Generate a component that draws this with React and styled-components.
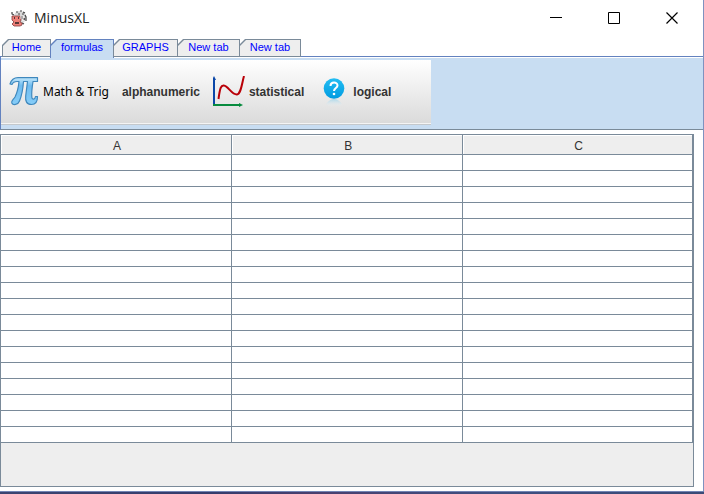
import React, { useState } from "react";
import styled, { createGlobalStyle } from "styled-components";

const line = "#7a8a99";
const accent = "#6382bf";
const sky = "#c8ddf2";

const GlobalStyle = createGlobalStyle`
  * { box-sizing: border-box; }
  body {
    margin: 0;
    background: #fff;
    font-family: "Liberation Sans", Arial, sans-serif;
  }
  button { font: inherit; border: 0; margin: 0; background: none; }
`;

const Window = styled.main`
  display: flex;
  flex-direction: column;
  min-height: 100vh;
`;

const Body = styled.div`
  flex: 1;
  display: flex;
  flex-direction: column;
  border-right: 1px solid #7f92c0;
`;

const TitleBar = styled.header`
  display: flex;
  align-items: center;
  height: 37px;
  padding: 0 2px 1px 11px;
`;

const Title = styled.h1`
  flex: 1;
  margin: 0;
  padding-left: 6px;
  font: 14px/20px "Open Sans", "Noto Sans", sans-serif;
  color: #222;
`;

const WindowButton = styled.button`
  display: grid;
  place-items: center;
  width: 58px;
  height: 36px;
  padding: 0;
`;

const TabStrip = styled.div`
  display: flex;
  align-items: flex-start;
  height: 20px;
  padding: 2px 0 0 2px;
  box-shadow: inset 0 -1px ${accent};
`;

const Tab = styled.button`
  position: relative;
  isolation: isolate;
  height: ${(p) => (p.$active ? 19 : 18)}px;
  width: ${(p) => p.$width}px;
  margin-left: ${(p) => (p.$first ? 0 : -1)}px;
  padding: 0 0 ${(p) => (p.$active ? 3 : 2)}px;
  font-size: 11px;
  line-height: 16px;
  text-align: center;
  color: #0000ff;
  background: ${(p) => (p.$active ? accent : line)};
  clip-path: polygon(6px 0, 100% 0, 100% 100%, 0 100%, 0 6px);

  &::before {
    content: "";
    position: absolute;
    z-index: -1;
    inset: 1px 1px ${(p) => (p.$active ? 0 : 1)}px 1px;
    background: ${(p) => (p.$active ? sky : "#eee")};
    clip-path: polygon(6px 0, 100% 0, 100% 100%, 0 100%, 0 6px);
  }
`;

const Ribbon = styled.section`
  height: 73px;
  padding-top: 3px;
  border: solid ${line};
  border-width: 0 0 1px;
  border-left: 1px solid ${accent};
  background: ${sky};
  box-shadow: inset 0 1px #fff;
`;

const Tools = styled.div`
  display: flex;
  align-items: center;
  width: 430px;
  max-width: 100%;
  height: 65px;
  padding: 0 0 1px 8px;
  border-bottom: 1px solid #c4c8cc;
  background: linear-gradient(#fff, #dadada);
  box-shadow: inset 0 -1px #f4f4f4;
`;

const Tool = styled.button`
  display: flex;
  align-items: center;
  gap: ${(p) => p.$gap || 4}px;
  margin-right: 13px;
  padding: 0;
  white-space: nowrap;
  font: ${(p) =>
    p.$plain
      ? '12px/16px "Noto Sans", "Open Sans", sans-serif'
      : 'bold 12px/16px "Liberation Sans", Arial, sans-serif'};
  color: ${(p) => (p.$plain ? "#000" : "#333")};

  &:last-child { padding-left: 6px; }
`;

const Sheet = styled.div`
  flex: 1;
  margin: 4px 9px 4px 0;
  border: 1px solid ${line};
  background: #eee;
`;

const Grid = styled.table`
  width: 100%;
  table-layout: fixed;
  border-collapse: separate;
  border-spacing: 0;
`;

const Column = styled.col`
  width: ${(p) => (p.$last ? "auto" : "33.4%")};
`;

const Heading = styled.th`
  height: 20px;
  padding: 2px 0 0 2px;
  font-size: 12px;
  font-weight: normal;
  line-height: 16px;
  color: #333;
  background: #eee;
  border: solid ${line};
  border-width: 0 1px 1px 0;
  box-shadow: inset 1px 1px #fff;
`;

const Cell = styled.td`
  height: 16px;
  padding: 0;
  background: #fff;
  border: solid ${line};
  border-width: 0 1px 1px 0;
`;

const Desktop = styled.div`
  height: 3px;
  border-top: 1px solid #7285b4;
  background: linear-gradient(90deg, #3c4470, #353c6c 30%, #4a3f6e 45%, #3f4f80 70%, #3a4a76);
`;

function CowIcon() {
  return (
    <svg width="17" height="17" viewBox="0 0 17 17" aria-hidden="true">
      <path d="M4 3 8 1l5 1 2 3v5l-3 3H5L3 7z" fill="#d9d9d9" />
      <path d="M1 2v2l2 1M5 2h2M9 1h2M12 2l2 1M14 5l1 2v4M7 4h2M11 4h2M11 13l2 1" fill="none" stroke="#444" strokeWidth="1.2" />
      <path d="M1 6h8l1 4-1 2 2 1v2l-2 1H3l-2-2 2-2-2-2z" fill="#ef8078" stroke="#843b3b" strokeWidth=".8" />
      <path d="M3 8h1M7 8h1M4 13h4M11 6v3M13 8v2" stroke="#2a2020" strokeWidth="1.4" />
      <path d="M10 6v3M12 6v5" stroke="#fff" />
    </svg>
  );
}

function PiIcon() {
  return (
    <svg width="30" height="30" viewBox="0 0 30 30" aria-hidden="true">
      <defs>
        <linearGradient id="pi" x2="0" y2="1">
          <stop stopColor="#c5e9fc" />
          <stop offset=".3" stopColor="#6fbcf0" />
          <stop offset="1" stopColor="#86cdf8" />
        </linearGradient>
      </defs>
      <path d="M1 7C2.500 2 5 .600 9 .600H28.500V4.500H24C23 11 22.500 17 22.800 20C23 23 26 23 26.500 19.500H28.500C28.500 25 26.500 27.500 22.500 27.500C17.500 27.500 16.200 24 16.700 19L18.500 4.500H14.500C14 12 12.500 19 10.500 24C9 28 4 28.500 2.800 26C2 23.500 4.500 22.500 6 20C8 16 9.500 10 10 4.500H8C5 4.500 4 5 3 7.500Z" fill="url(#pi)" stroke="#3f88bd" strokeWidth="1.200" strokeLinejoin="round" />
    </svg>
  );
}

function ChartIcon() {
  return (
    <svg width="32" height="32" viewBox="0 0 32 32" aria-hidden="true">
      <path d="M1 29V3" stroke="#0b47a8" strokeWidth="2" />
      <path d="M-1 4 1 0l2 4z" fill="#0b47a8" />
      <path d="M0 29H27" stroke="#078b3e" strokeWidth="2" />
      <path d="m26 27 4 2-4 2z" fill="#078b3e" />
      <path d="M5.500 23C7 12 8 9 11 9.500C15 10 19 19 24 18.500C28 18 29 7 31 0" fill="none" stroke="#b90008" strokeWidth="2" />
    </svg>
  );
}

function HelpIcon() {
  return (
    <svg width="22" height="30" viewBox="0 0 22 30" aria-hidden="true">
      <defs>
        <linearGradient id="ball" x2="0" y2="1">
          <stop stopColor="#23bdf3" />
          <stop offset="1" stopColor="#009be0" />
        </linearGradient>
        <linearGradient id="mirror" x2="0" y2="1">
          <stop stopColor="#6fc8ec" stopOpacity=".5" />
          <stop offset="1" stopColor="#fff" stopOpacity="0" />
        </linearGradient>
      </defs>
      <circle cx="11" cy="11.500" r="10.300" fill="url(#ball)" />
      <path d="M7.500 9C7.500 4.500 14.500 4.500 14.500 8.500C14.500 11 11 11 11 14" fill="none" stroke="#fff" strokeWidth="2" />
      <circle cx="11" cy="17" r="1.300" fill="#fff" />
      <path d="M3 27Q11 17 19 27Q17 30 11 30Q5 30 3 27Z" fill="url(#mirror)" />
    </svg>
  );
}

const tabs = [
  { label: "Home", width: 49 },
  { label: "formulas", width: 64 },
  { label: "GRAPHS", width: 65 },
  { label: "New tab", width: 63 },
  { label: "New tab", width: 62 },
];
const columns = ["A", "B", "C"];
const rows = Array.from({ length: 18 }, (_, i) => i + 1);

export default function App() {
  const [active, setActive] = useState(1);
  return (
    <Window>
      <GlobalStyle />
      <Body>
        <TitleBar>
          <CowIcon />
          <Title>MinusXL</Title>
          <WindowButton aria-label="Minimize">
            <svg width="12" height="12" aria-hidden="true"><path d="M0 5.500h12" stroke="#000" /></svg>
          </WindowButton>
          <WindowButton aria-label="Maximize">
            <svg width="12" height="12" aria-hidden="true"><path d="M.5.5h11v11H.5z" fill="none" stroke="#000" /></svg>
          </WindowButton>
          <WindowButton aria-label="Close">
            <svg width="12" height="12" aria-hidden="true"><path d="m.5.500 11 11m0-11-11 11" stroke="#000" strokeWidth="1.200" /></svg>
          </WindowButton>
        </TitleBar>
        <TabStrip role="tablist">
          {tabs.map((tab, i) => (
            <Tab
              key={i}
              role="tab"
              aria-selected={i === active}
              $active={i === active}
              $first={i === 0}
              $width={tab.width}
              onClick={() => setActive(i)}
            >
              {tab.label}
            </Tab>
          ))}
        </TabStrip>
        <Ribbon>
          <Tools>
            <Tool $plain><PiIcon />Math &amp; Trig</Tool>
            <Tool>alphanumeric</Tool>
            <Tool><ChartIcon />statistical</Tool>
            <Tool $gap={8}><HelpIcon />logical</Tool>
          </Tools>
        </Ribbon>
        <Sheet>
          <Grid>
            <colgroup>
              {columns.map((c, i) => <Column key={c} $last={i === columns.length - 1} />)}
            </colgroup>
            <thead>
              <tr>{columns.map((c) => <Heading key={c} scope="col">{c}</Heading>)}</tr>
            </thead>
            <tbody>
              {rows.map((r) => (
                <tr key={r}>{columns.map((c) => <Cell key={c} />)}</tr>
              ))}
            </tbody>
          </Grid>
        </Sheet>
      </Body>
      <Desktop />
    </Window>
  );
}
